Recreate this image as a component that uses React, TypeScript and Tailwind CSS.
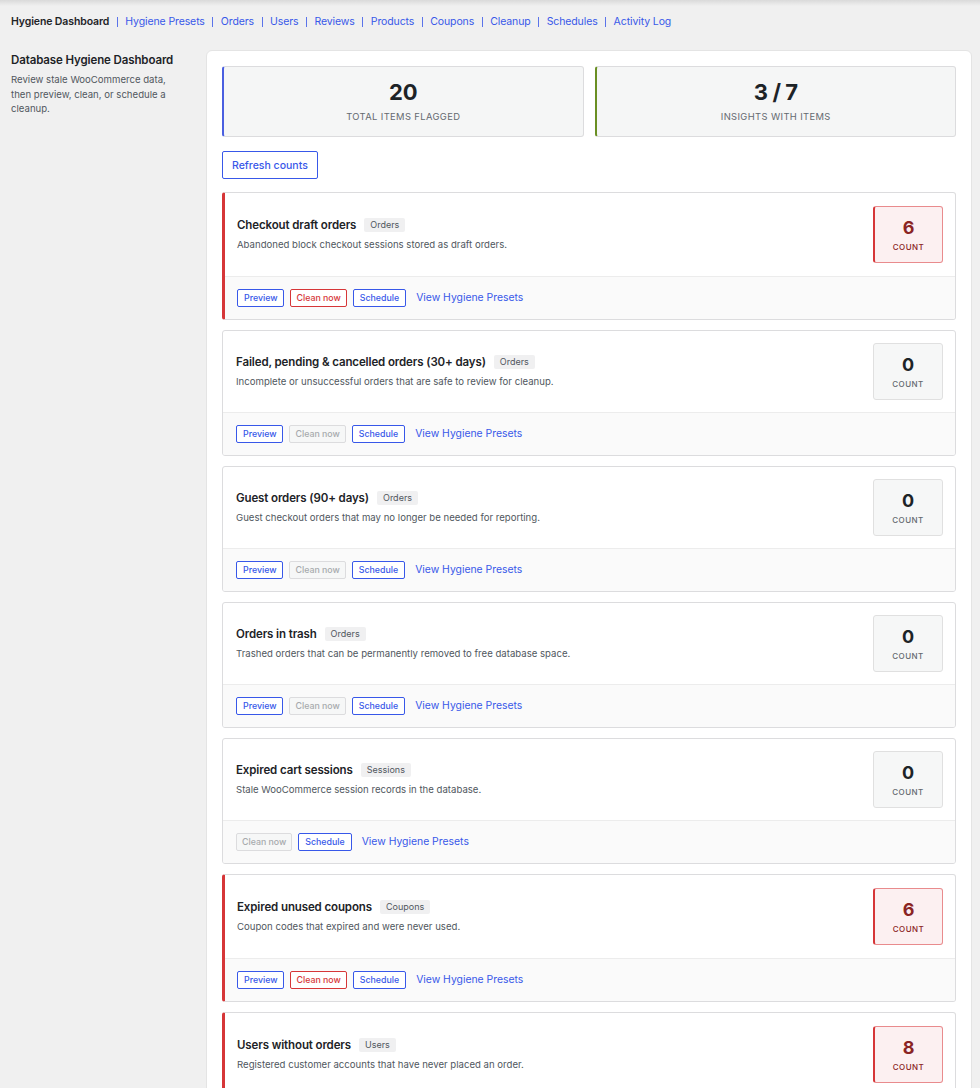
import React from 'react';

type Insight = {
  title: string;
  tag: string;
  desc: string;
  count: number;
  preview: boolean;
};

const navItems = [
  'Hygiene Presets',
  'Orders',
  'Users',
  'Reviews',
  'Products',
  'Coupons',
  'Cleanup',
  'Schedules',
  'Activity Log',
];

const insights: Insight[] = [
  { title: 'Checkout draft orders', tag: 'Orders', desc: 'Abandoned block checkout sessions stored as draft orders.', count: 6, preview: true },
  { title: 'Failed, pending & cancelled orders (30+ days)', tag: 'Orders', desc: 'Incomplete or unsuccessful orders that are safe to review for cleanup.', count: 0, preview: true },
  { title: 'Guest orders (90+ days)', tag: 'Orders', desc: 'Guest checkout orders that may no longer be needed for reporting.', count: 0, preview: true },
  { title: 'Orders in trash', tag: 'Orders', desc: 'Trashed orders that can be permanently removed to free database space.', count: 0, preview: true },
  { title: 'Expired cart sessions', tag: 'Sessions', desc: 'Stale WooCommerce session records in the database.', count: 0, preview: false },
  { title: 'Expired unused coupons', tag: 'Coupons', desc: 'Coupon codes that expired and were never used.', count: 6, preview: true },
  { title: 'Users without orders', tag: 'Users', desc: 'Registered customer accounts that have never placed an order.', count: 8, preview: true },
];

function InsightCard({ item }: { item: Insight }) {
  const flagged = item.count > 0;
  return (
    <div
      className={
        flagged
          ? 'bg-white border border-[#dcdcde] border-l-[3px] border-l-[#d63638] rounded-[3px] overflow-hidden'
          : 'bg-white border border-[#dcdcde] rounded-[3px] overflow-hidden'
      }
    >
      {/* Top section */}
      <div className={flagged ? 'flex items-center justify-between pl-[12px] pr-[12px] py-[13px]' : 'flex items-center justify-between pl-[13px] pr-[12px] py-[12px]'}>
        <div>
          <div className="flex items-center gap-[8px]">
            <h4 className="text-[11.5px] tracking-[-0.01em] font-semibold text-[#1d2327] leading-[16px]">{item.title}</h4>
            <span className="text-[9px] text-[#50575e] bg-[#f0f0f1] px-[6px] leading-[14px] rounded-[2px]">{item.tag}</span>
          </div>
          <p className="text-[9.6px] text-[#50575e] leading-[14px] mt-[5px]">{item.desc}</p>
        </div>
        {flagged ? (
          <div className="w-[70px] h-[57px] flex flex-col items-center justify-center bg-[#fcf0f1] border border-[#e98b8d] border-l-2 border-l-[#d63638] rounded-[3px]">
            <span className="text-[18px] font-bold text-[#8a2424] leading-[22px]">{item.count}</span>
            <span className="text-[8px] tracking-[0.06em] font-medium text-[#8a2424] mt-[2px]">COUNT</span>
          </div>
        ) : (
          <div className="w-[70px] h-[57px] flex flex-col items-center justify-center bg-[#f6f7f7] border border-[#e0e0e0] rounded-[3px]">
            <span className="text-[18px] font-bold text-[#1d2327] leading-[22px]">{item.count}</span>
            <span className="text-[8px] tracking-[0.06em] font-medium text-[#646970] mt-[2px]">COUNT</span>
          </div>
        )}
      </div>

      {/* Actions */}
      <div className={flagged ? 'flex items-center gap-[6px] bg-[#fafafa] border-t border-[#ececec] pl-[12px] h-[43px]' : 'flex items-center gap-[6px] bg-[#fafafa] border-t border-[#ececec] pl-[13px] h-[43px]'}>
        {item.preview && (
          <button className="h-[18px] px-[6px] text-[8.8px] font-medium text-[#3858e9] border border-[#3858e9] rounded-[2px] bg-white">
            Preview
          </button>
        )}
        {flagged ? (
          <button className="h-[18px] px-[5px] text-[8.8px] font-medium text-[#d63638] border border-[#d63638] rounded-[2px] bg-white">
            Clean now
          </button>
        ) : (
          <button className="h-[18px] px-[5px] text-[8.8px] font-medium text-[#a7aaad] border border-[#dcdcde] rounded-[2px] bg-[#f6f7f7]">
            Clean now
          </button>
        )}
        <button className="h-[18px] px-[6px] text-[8.8px] font-medium text-[#3858e9] border border-[#3858e9] rounded-[2px] bg-white">
          Schedule
        </button>
        <a className="ml-[4px] text-[10.4px] text-[#3858e9]" href="#">
          View Hygiene Presets
        </a>
      </div>
    </div>
  );
}

export default function App() {
  return (
    <div className="min-h-[1088px] bg-[#f0f0f0] font-['Inter',sans-serif] text-[#1d2327] relative">
      {/* top shadow */}
      <div className="h-[6px] bg-gradient-to-b from-[#dadada] to-[#f0f0f0]" />

      {/* Nav */}
      <nav className="flex items-center pl-[11px] pt-[2px] h-[30px] text-[10.5px] tracking-[-0.01em]">
        <span className="font-semibold text-[#1d2327]">Hygiene Dashboard</span>
        {navItems.map((n) => (
          <React.Fragment key={n}>
            <span className="mx-[7.5px] w-px h-[10px] bg-[#5b74ea]" />
            <a href="#" className="text-[#3858e9]">{n}</a>
          </React.Fragment>
        ))}
      </nav>

      <div className="flex mt-[14px]">
        {/* Sidebar */}
        <aside className="w-[206px] pl-[11px] pr-[38px] pt-[2px] shrink-0">
          <h2 className="text-[11.5px] tracking-[-0.01em] font-semibold leading-[16px] text-[#1d2327] whitespace-nowrap">Database Hygiene Dashboard</h2>
          <p className="text-[9.6px] text-[#50575e] leading-[14.5px] mt-[5px]">
            Review stale WooCommerce data, then preview, clean, or schedule a cleanup.
          </p>
        </aside>

        {/* Main panel */}
        <main className="w-[766px] bg-white border border-[#e4e4e4] rounded-[6px] p-[15px] min-h-[1040px]">
          <div className="grid grid-cols-2 gap-[11px]">
            <div className="h-[71px] flex flex-col items-center justify-center bg-[#f5f6f6] border border-[#dcdcde] border-l-2 border-l-[#4a5fe0] rounded-[3px]">
              <span className="text-[22px] font-bold leading-[26px] text-[#1d2327]">20</span>
              <span className="text-[9.4px] tracking-[0.04em] text-[#646970] mt-[5px]">TOTAL ITEMS FLAGGED</span>
            </div>
            <div className="h-[71px] flex flex-col items-center justify-center bg-[#f5f6f6] border border-[#dcdcde] border-l-2 border-l-[#6a8f23] rounded-[3px]">
              <span className="text-[22px] font-bold leading-[26px] text-[#1d2327] tracking-[-0.02em]">3 / 7</span>
              <span className="text-[9.4px] tracking-[0.04em] text-[#646970] mt-[5px]">INSIGHTS WITH ITEMS</span>
            </div>
          </div>

          <button className="mt-[14px] h-[28px] px-[9px] pt-[1px] text-[10.5px] font-medium text-[#3858e9] border border-[#3858e9] rounded-[2px] bg-white">
            Refresh counts
          </button>

          <div className="mt-[13px] flex flex-col gap-[10px]">
            {insights.map((it) => (
              <InsightCard key={it.title} item={it} />
            ))}
          </div>
        </main>
      </div>
    </div>
  );
}
